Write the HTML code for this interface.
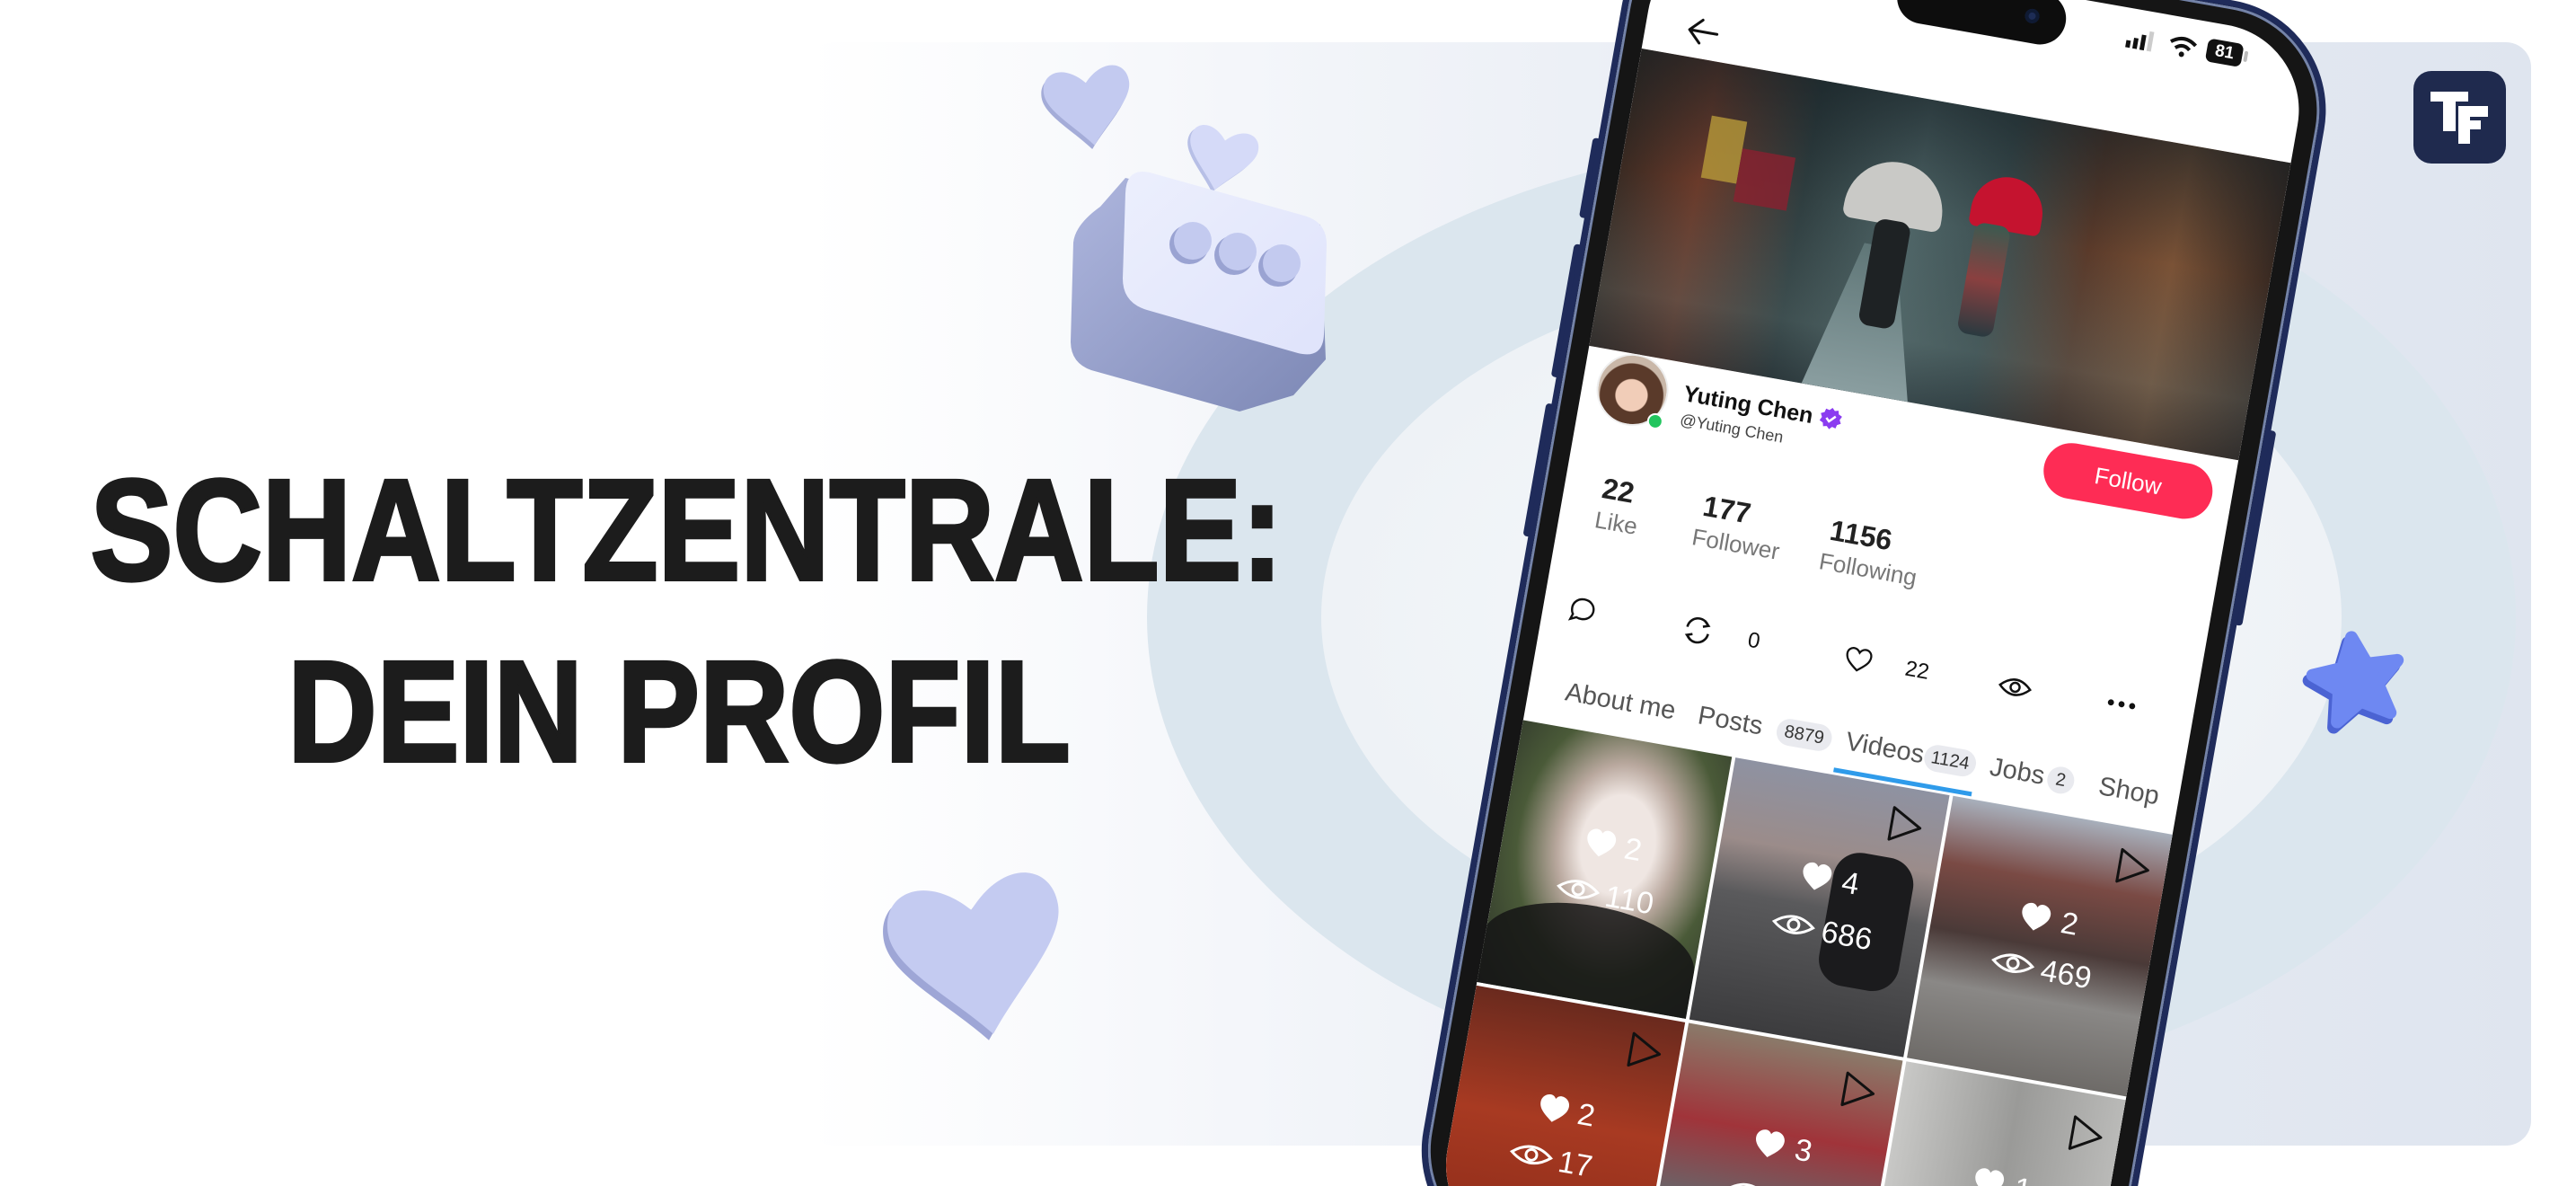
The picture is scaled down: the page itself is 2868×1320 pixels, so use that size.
<!DOCTYPE html>
<html><head><meta charset="utf-8">
<style>
*{margin:0;padding:0;box-sizing:border-box}
html{width:2868px;height:1320px;overflow:hidden}
body{width:2868px;height:1320px;overflow:hidden;background:#fff;position:relative;font-family:"Liberation Sans","DejaVu Sans",sans-serif}
#clip{position:absolute;left:0;top:0;width:2868px;height:1320px;overflow:hidden}
.abs{position:absolute}
#panel{left:900px;top:47px;width:1918px;height:1228px;border-radius:28px;overflow:hidden;background:linear-gradient(90deg,#ffffff 0%,#f4f6fa 25%,#e6ebf3 60%,#dfe5ef 100%)}
#title{left:-6px;top:489px;width:1524px;text-align:center;font-weight:bold;font-size:160px;line-height:202px;color:#1c1c1c;transform:scaleX(.86);transform-origin:762px 0;-webkit-text-stroke:4px #1c1c1c}
#ph{left:1793px;top:-37px;width:800px;height:1500px;transform-origin:400px 0;transform:rotate(10deg)}
#frame{left:26px;top:-14px;width:794px;height:1520px;border-radius:124px;background:#151515;border:7px solid #1f2b5a;box-shadow:inset 0 0 0 3px #7483a8}
#scr{left:56px;top:14px;width:734px;height:1480px;border-radius:96px;background:#fff;overflow:hidden}
#scr .abs{white-space:nowrap}
.num{font-weight:bold;font-size:32px;line-height:36px;color:#222}
.lab{font-size:26px;line-height:32px;color:#777}
.tab{font-size:29px;line-height:34px;color:#555;top:842px}
.bdg{top:845px;height:30px;border-radius:15px;background:#e9eaef;font-size:20px;line-height:30px;color:#333;text-align:center}
.cell{overflow:hidden}
</style></head><body>
<div id="clip">
<div id="panel" class="abs">
<svg class="abs" style="left:0;top:0" width="1918" height="1228">
<defs><radialGradient id="rg" cx="0.5" cy="0.5" r="0.5"><stop offset="0" stop-color="#f6f8fb"/><stop offset="1" stop-color="#eef2f6"/></radialGradient></defs>
<ellipse cx="1139" cy="640" rx="762" ry="530" fill="#dbe6ee"/>
<ellipse cx="1139" cy="640" rx="568" ry="380" fill="url(#rg)"/>
</svg>
</div>
<div id="title" class="abs">SCHALTZENTRALE:<br>DEIN PROFIL</div>

<svg class="abs" style="left:0;top:0" width="1600" height="1320">
<defs>
<linearGradient id="side" x1="0" y1="0" x2="1" y2="1"><stop offset="0" stop-color="#aeb6de"/><stop offset="1" stop-color="#7d88b5"/></linearGradient>
<linearGradient id="face" x1="0" y1="0" x2="1" y2="1"><stop offset="0" stop-color="#eceffd"/><stop offset="1" stop-color="#dfe3fb"/></linearGradient>
</defs>
<g transform="translate(1213,122) rotate(-8)">
<path d="M0 40 C-20 15 -48 -5 -48 -25 C-48 -48 -22 -55 0 -30 C22 -55 48 -48 48 -25 C48 -5 20 15 0 40Z" fill="#a4acd8" transform="translate(-3,4)"/>
<path d="M0 40 C-20 15 -48 -5 -48 -25 C-48 -48 -22 -55 0 -30 C22 -55 48 -48 48 -25 C48 -5 20 15 0 40Z" fill="#c3caf0"/>
</g>
<g transform="translate(1359,180) rotate(12) scale(.8)">
<path d="M0 40 C-20 15 -48 -5 -48 -25 C-48 -48 -22 -55 0 -30 C22 -55 48 -48 48 -25 C48 -5 20 15 0 40Z" fill="#b7bfe6" transform="translate(-3,4)"/>
<path d="M0 40 C-20 15 -48 -5 -48 -25 C-48 -48 -22 -55 0 -30 C22 -55 48 -48 48 -25 C48 -5 20 15 0 40Z" fill="#d5daf8"/>
</g>
<path d="M1225 230 L1253 198 L1470 250 L1476 400 L1440 440 L1380 458 L1215 412 Q1192 404 1192 380 L1195 270 Q1197 250 1225 230Z" fill="url(#side)"/>
<path d="M1280 192 L1452 240 Q1477 247 1477 272 L1474 372 Q1473 400 1445 393 L1277 345 Q1250 337 1250 310 L1253 215 Q1254 186 1280 192Z" fill="url(#face)"/>
<g fill="#9aa3d2"><circle cx="1324" cy="272" r="22"/><circle cx="1374" cy="284" r="22"/><circle cx="1423" cy="297" r="22"/></g>
<g fill="#c3caef"><circle cx="1328" cy="268" r="21"/><circle cx="1378" cy="280" r="21"/><circle cx="1427" cy="293" r="21"/></g>
<g transform="translate(1092,1072) rotate(-10) scale(2)">
<path d="M0 40 C-20 15 -48 -5 -48 -25 C-48 -48 -22 -55 0 -30 C22 -55 48 -48 48 -25 C48 -5 20 15 0 40Z" fill="#9ea6d6" transform="translate(-3,3)"/>
<path d="M0 40 C-20 15 -48 -5 -48 -25 C-48 -48 -22 -55 0 -30 C22 -55 48 -48 48 -25 C48 -5 20 15 0 40Z" fill="#c4cbf1"/>
</g>
</svg>

<svg class="abs" style="left:2556px;top:697px" width="125" height="120" viewBox="0 0 125 120">
<path d="M70 12 L82 44 L116 46 L90 68 L98 102 L68 84 L38 102 L46 68 L20 46 L54 44Z" fill="#4b63d3" transform="translate(-4,6) rotate(-10 68 58)" stroke="#4b63d3" stroke-width="14" stroke-linejoin="round"/>
<path d="M70 12 L82 44 L116 46 L90 68 L98 102 L68 84 L38 102 L46 68 L20 46 L54 44Z" fill="#6e88f2" transform="rotate(-10 68 58)" stroke="#6e88f2" stroke-width="14" stroke-linejoin="round"/>
</svg>

<div class="abs" style="left:2687px;top:79px;width:103px;height:103px;border-radius:20px;background:#1f2a4e">
<div class="abs" style="left:19px;top:23px;width:42px;height:11px;background:#fff"></div>
<div class="abs" style="left:33px;top:23px;width:14px;height:44px;background:#fff"></div>
<div class="abs" style="left:50px;top:39px;width:13px;height:42px;background:#fff"></div>
<div class="abs" style="left:50px;top:39px;width:33px;height:12px;background:#fff"></div>
<div class="abs" style="left:50px;top:55px;width:25px;height:10px;background:#fff"></div>
</div>

<div id="ph" class="abs">
<div class="abs" style="left:20px;top:260px;width:10px;height:90px;background:#1f2b5a;border-radius:4px"></div>
<div class="abs" style="left:20px;top:380px;width:10px;height:150px;background:#1f2b5a;border-radius:4px"></div>
<div class="abs" style="left:20px;top:560px;width:10px;height:150px;background:#1f2b5a;border-radius:4px"></div>
<div class="abs" style="left:816px;top:450px;width:10px;height:220px;background:#1f2b5a;border-radius:4px"></div>
<div id="frame" class="abs"></div>
<div id="scr" class="abs">
 <div class="abs" style="left:270px;top:0;width:190px;height:58px;border-radius:29px;background:#0d0d0d"></div>
 <div class="abs" style="left:414px;top:20px;width:16px;height:16px;border-radius:50%;background:#1d2c55;box-shadow:inset 0 0 0 4px #0f1a33"></div>
 <svg class="abs" style="left:528px;top:20px" width="40" height="26"><rect x="2" y="16" width="5" height="8" fill="#111"/><rect x="10" y="12" width="5" height="12" fill="#111"/><rect x="18" y="7" width="5" height="17" fill="#111"/><rect x="26" y="2" width="5" height="22" fill="#ccc"/></svg>
 <svg class="abs" style="left:576px;top:20px" width="34" height="26" viewBox="0 0 34 26"><path d="M3 9 Q17 -2 31 9" stroke="#111" stroke-width="4" fill="none"/><path d="M9 15 Q17 8 25 15" stroke="#111" stroke-width="4" fill="none"/><circle cx="17" cy="21" r="3" fill="#111"/></svg>
 <div class="abs" style="left:620px;top:18px;width:40px;height:26px;border-radius:7px;background:#111;color:#fff;font-weight:bold;font-size:19px;line-height:26px;text-align:center">81</div>
 <div class="abs" style="left:662px;top:25px;width:4px;height:12px;border-radius:2px;background:#bbb"></div>
 <svg class="abs" style="left:44px;top:92px" width="40" height="34" viewBox="0 0 40 34"><path d="M36 17 H5 M18 4 L5 17 L18 30" stroke="#111" stroke-width="3" fill="none" stroke-linecap="round" stroke-linejoin="round"/></svg>
 <div class="abs" style="left:0;top:139px;width:734px;height:336px;overflow:hidden;background:linear-gradient(90deg,#3a2a22 0%,#6a3a2a 12%,#2f3e40 28%,#4e6466 45%,#3d5052 58%,#5a3a2a 72%,#7a5236 85%,#3a2a22 100%)">
  <div class="abs" style="left:0;top:0;width:734px;height:336px;background:linear-gradient(180deg,rgba(20,30,35,.6) 0%,rgba(0,0,0,0) 40%,rgba(90,110,110,.35) 80%,rgba(40,50,55,.5) 100%)"></div>
  <div class="abs" style="left:240px;top:170px;width:120px;height:166px;background:linear-gradient(180deg,#5f7677,#8a9ea0);clip-path:polygon(35% 0,65% 0,100% 100%,0 100%)"></div>
  <div class="abs" style="left:90px;top:60px;width:40px;height:70px;background:#b89a3a;opacity:.8"></div>
  <div class="abs" style="left:130px;top:90px;width:60px;height:60px;background:#8a2030;opacity:.8"></div>
  <div class="abs" style="left:252px;top:75px;width:110px;height:70px;border-radius:55px 55px 10px 10px;background:#c9c9c6"></div>
  <div class="abs" style="left:290px;top:140px;width:40px;height:120px;background:#1e2224;border-radius:12px"></div>
  <div class="abs" style="left:392px;top:70px;width:80px;height:60px;border-radius:40px 40px 8px 8px;background:#c5132f"></div>
  <div class="abs" style="left:400px;top:125px;width:40px;height:125px;background:linear-gradient(180deg,#3b5a50,#8a4040,#2a3a40);border-radius:12px"></div>
 </div>
 <div class="abs" style="left:16px;top:475px;width:80px;height:80px;border-radius:50%;background:radial-gradient(circle at 50% 58%,#f1cdb8 0 30%,#5a3a2a 32% 60%,#c9b7a8 62%);border:2px solid #eee"></div>
 <div class="abs" style="left:78px;top:536px;width:18px;height:18px;border-radius:50%;background:#22c55e;border:2px solid #fff"></div>
 <div class="abs" style="left:113px;top:493px;font-weight:bold;font-size:25px;line-height:32px;color:#111">Yuting Chen</div>
 <svg class="abs" style="left:266px;top:495px" width="26" height="26" viewBox="0 0 26 26"><path d="M13 1 L16 4 L20 3 L21 7 L25 9 L23 13 L25 17 L21 19 L20 23 L16 22 L13 25 L10 22 L6 23 L5 19 L1 17 L3 13 L1 9 L5 7 L6 3 L10 4Z" fill="#8b3cf0"/><path d="M8 13 L11.5 16.5 L18 10" stroke="#fff" stroke-width="2.5" fill="none"/></svg>
 <div class="abs" style="left:114px;top:527px;font-size:18px;line-height:22px;color:#444">@Yuting Chen</div>
 <div class="abs" style="left:522px;top:488px;width:190px;height:62px;border-radius:31px;background:#fe2c55;color:#fff;font-size:26px;line-height:62px;text-align:center">Follow</div>
 <div class="abs num" style="left:42px;top:610px">22</div>
 <div class="abs lab" style="left:40px;top:648px">Like</div>
 <div class="abs num" style="left:156px;top:610px">177</div>
 <div class="abs lab" style="left:150px;top:648px">Follower</div>
 <div class="abs num" style="left:300px;top:612px">1156</div>
 <div class="abs lab" style="left:294px;top:650px">Following</div>
 <svg class="abs" style="left:28px;top:750px" width="32" height="32" viewBox="0 0 32 32"><path d="M16 4 C23 4 28 9 28 15 C28 21 23 26 16 26 C14 26 12 25.6 10.5 25 L4 28 L6 22 C4.5 20 4 18 4 15 C4 9 9 4 16 4Z" stroke="#111" stroke-width="2.4" fill="none"/></svg>
 <svg class="abs" style="left:156px;top:749px" width="36" height="34" viewBox="0 0 36 34"><path d="M6 15 A12 12 0 0 1 28 9 M30 19 A12 12 0 0 1 8 25" stroke="#111" stroke-width="2.6" fill="none"/><path d="M24 5 L29 10 L23 12 M12 29 L7 24 L13 22" stroke="#111" stroke-width="2.6" fill="none"/></svg>
 <div class="abs" style="left:231px;top:752px;font-size:24px;line-height:30px;color:#111">0</div>
 <svg class="abs" style="left:338px;top:750px" width="36" height="34" viewBox="0 0 24 24"><path d="M12 20.5 C6 16 2.5 13 2.5 8.5 C2.5 5.5 4.8 3.5 7.3 3.5 C9.3 3.5 11 4.8 12 6.5 C13 4.8 14.7 3.5 16.7 3.5 C19.2 3.5 21.5 5.5 21.5 8.5 C21.5 13 18 16 12 20.5Z" stroke="#111" stroke-width="1.6" fill="none"/></svg>
 <div class="abs" style="left:409px;top:753px;font-size:24px;line-height:30px;color:#111">22</div>
 <svg class="abs" style="left:514px;top:752px" width="38" height="30" viewBox="0 0 38 30"><path d="M2 15 Q19 -2 36 15 Q19 32 2 15Z" stroke="#111" stroke-width="2.5" fill="none"/><circle cx="19" cy="15" r="5" stroke="#111" stroke-width="2.5" fill="none"/></svg>
 <svg class="abs" style="left:635px;top:758px" width="36" height="14"><circle cx="6" cy="7" r="3.4" fill="#111"/><circle cx="18" cy="7" r="3.4" fill="#111"/><circle cx="30" cy="7" r="3.4" fill="#111"/></svg>
 <div class="abs tab" style="left:41px">About me</div>
 <div class="abs tab" style="left:191px">Posts</div>
 <div class="abs bdg" style="left:280px;width:62px">8879</div>
 <div class="abs tab" style="left:358px">Videos</div>
 <div class="abs bdg" style="left:447px;width:58px">1124</div>
 <div class="abs tab" style="left:521px">Jobs</div>
 <div class="abs bdg" style="left:586px;width:30px">2</div>
 <div class="abs tab" style="left:644px">Shop</div>
 <div class="abs" style="left:350px;top:890px;width:156px;height:5px;background:#2f9bea"></div>
 <div class="abs" style="left:-4px;top:898px;width:760px;height:900px;background:#fff"></div>
 <div class="abs cell" style="left:-4px;top:898px;width:240px;height:296px;background:radial-gradient(ellipse at 55% 40%,#efe6e2 0 22%,#b9a89e 36%,#4a5a38 60%,#2a2f28 100%)"><div class="abs" style="left:0;top:190px;width:240px;height:110px;background:#151515;opacity:.85;border-radius:60% 60% 0 0"></div></div>
 <div class="abs cell" style="left:240px;top:898px;width:242px;height:296px;background:linear-gradient(180deg,#8e92a2 0%,#9b8c8a 30%,#5a5a5c 50%,#3c3c3e 100%)"><div class="abs" style="left:130px;top:80px;width:90px;height:150px;background:#1b1b1d;border-radius:30px"></div></div>
 <div class="abs cell" style="left:486px;top:898px;width:260px;height:296px;background:linear-gradient(180deg,#a8b0bc 0%,#7a4a44 25%,#4a3a38 50%,#8a8886 70%,#6e6b68 100%)"></div>
 <div class="abs cell" style="left:-4px;top:1198px;width:240px;height:296px;background:linear-gradient(180deg,#6a2a1e 0%,#a83a22 45%,#8a2a18 100%)"></div>
 <div class="abs cell" style="left:240px;top:1198px;width:242px;height:296px;background:linear-gradient(180deg,#8a7a6a 0%,#a0343a 35%,#5e6e72 70%,#4a5a60 100%)"></div>
 <div class="abs cell" style="left:486px;top:1198px;width:260px;height:296px;background:linear-gradient(90deg,#c8c8c6,#9a9a98 50%,#bdbdbb)"></div>
 <svg class="abs" style="left:-4px;top:898px" width="760" height="620" viewBox="0 0 760 620">
  <defs>
   <path id="hf" d="M0 16 C-9 9 -16 4 -16 -4 C-16 -10 -11 -14 -6 -14 C-3 -14 -1 -12 0 -10 C1 -12 3 -14 6 -14 C11 -14 16 -10 16 -4 C16 4 9 9 0 16Z" fill="#fff"/>
   <g id="ey"><path d="M-22 0 Q0 -18 22 0 Q0 18 -22 0Z" stroke="#fff" stroke-width="3" fill="none"/><circle r="6" stroke="#fff" stroke-width="3" fill="none"/></g>
   <path id="pl" d="M-14 -18 L18 0 L-14 18Z" stroke="#111" stroke-width="3" fill="none" stroke-linejoin="round"/>
  </defs>
  <g font-family="Liberation Sans, DejaVu Sans, sans-serif" font-size="34" fill="#fff">
   <use href="#hf" x="113" y="119"/><text x="140" y="132">2</text>
   <use href="#ey" x="97" y="175"/><text x="128" y="188">110</text>
   <use href="#hf" x="356" y="114"/><text x="385" y="127">4</text>
   <use href="#ey" x="340" y="172"/><text x="372" y="185">686</text>
   <use href="#pl" x="442" y="42"/>
   <use href="#hf" x="604" y="116"/><text x="633" y="129">2</text>
   <use href="#ey" x="588" y="172"/><text x="620" y="185">469</text>
   <use href="#pl" x="700" y="44"/>
   <use href="#hf" x="113" y="419"/><text x="140" y="432">2</text>
   <use href="#ey" x="97" y="475"/><text x="128" y="488">17</text>
   <use href="#pl" x="200" y="340"/>
   <use href="#hf" x="356" y="416"/><text x="385" y="429">3</text>
   <use href="#ey" x="340" y="475"/>
   <use href="#pl" x="442" y="342"/>
   <use href="#hf" x="604" y="416"/><text x="633" y="429">1</text>
   <use href="#pl" x="700" y="346"/>
  </g>
 </svg>
</div>
</div>
</div>
</body></html>
